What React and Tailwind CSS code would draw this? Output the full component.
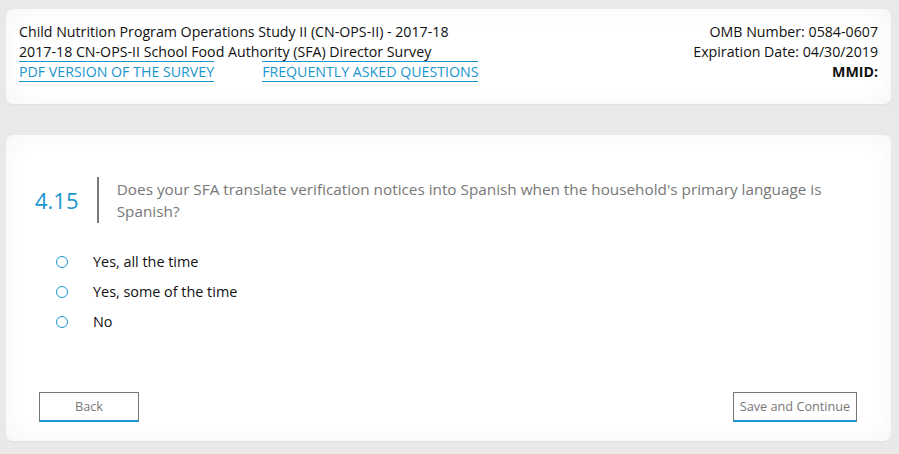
export default function App() {
  const options = ["Yes, all the time", "Yes, some of the time", "No"];
  return (
    <div
      className="min-h-[454px] w-full bg-[#e9e9e9] px-[6px] pt-[9px] pb-[14px]"
      style={{ fontFamily: '"Open Sans", "Noto Sans", sans-serif' }}
    >
      <header className="mr-[2px] flex justify-between rounded-[7px] bg-white px-[13px] pt-[13px] pb-[22px] text-[14.2px] leading-[20px] text-[#111] shadow-[inset_0_0_24px_rgba(0,0,0,0.045),0_1px_2px_rgba(0,0,0,0.04)]">
        <div>
          <div>Child Nutrition Program Operations Study II (CN-OPS-II) - 2017-18</div>
          <div>2017-18 CN-OPS-II School Food Authority (SFA) Director Survey</div>
          <div className="flex gap-[48px]">
            <a className="-mt-[1px] border-y border-[#1a96d0] leading-[19px] text-[#1a96d0]">PDF VERSION OF THE SURVEY</a>
            <a className="-mt-[1px] border-y border-[#1a96d0] leading-[19px] text-[#1a96d0]">FREQUENTLY ASKED QUESTIONS</a>
          </div>
        </div>
        <div className="text-right">
          <div>OMB Number: 0584-0607</div>
          <div>Expiration Date: 04/30/2019</div>
          <div className="font-bold">MMID:</div>
        </div>
      </header>

      <main className="mt-[31px] mr-[2px] rounded-[7px] bg-white pt-[42px] pb-[19px] shadow-[inset_0_0_24px_rgba(0,0,0,0.045),0_1px_2px_rgba(0,0,0,0.04)]">
        <div className="flex items-center pl-[29px] pr-[30px]">
          <div className="w-[64px] text-[22px] leading-[28px] text-[#1a96d0]">4.15</div>
          <div className="flex h-[46px] max-w-[770px] items-center border-l-2 border-[#777] pl-[18px] text-[15.3px] leading-[22px] text-[#777]">
            Does your SFA translate verification notices into Spanish when the household's primary language is Spanish?
          </div>
        </div>

        <div className="mt-[24px] flex flex-col pl-[44px]">
          {options.map((o) => (
            <label key={o} className="flex h-[30px] items-center text-[14.4px] text-[#111]">
              <span className="ml-[6px] mr-[25px] block h-[12px] w-[12px] rounded-full border-[1.5px] border-[#1a96d0]" />
              {o}
            </label>
          ))}
        </div>

        <div className="mt-[55px] flex justify-between pl-[33px] pr-[34px]">
          <button className="h-[30px] w-[100px] border border-b-2 border-[#777] border-b-[#1a96d0] bg-white text-[12.7px] text-[#777]">
            Back
          </button>
          <button className="h-[30px] w-[124px] border border-b-2 border-[#777] border-b-[#1a96d0] bg-white text-[12.7px] text-[#777]">
            Save and Continue
          </button>
        </div>
      </main>
    </div>
  );
}
